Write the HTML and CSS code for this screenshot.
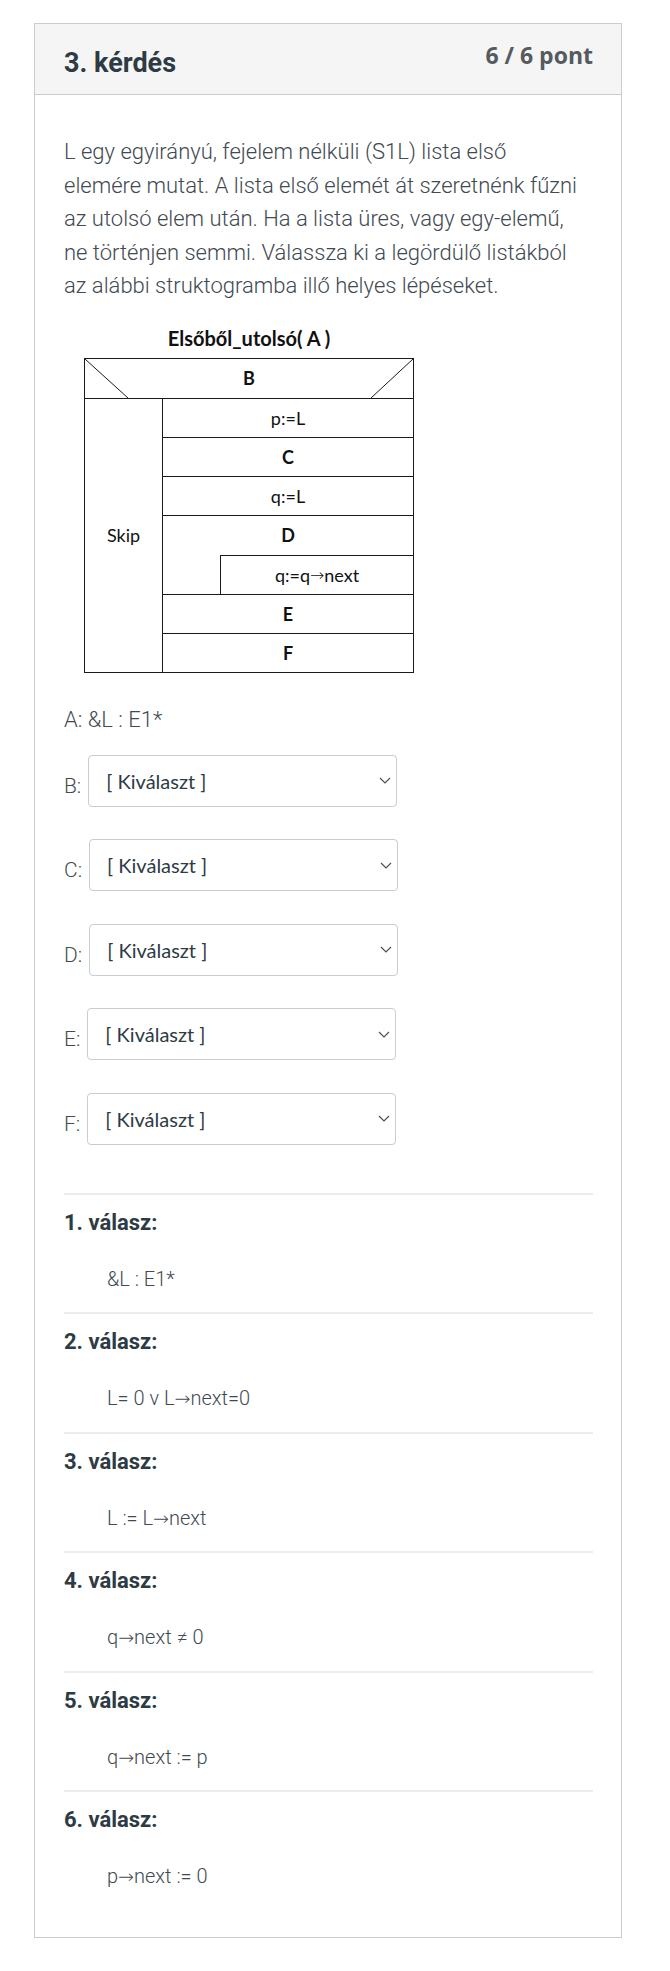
FILE: index.html
```html
<!DOCTYPE html>
<html lang="hu">
<head>
<meta charset="utf-8">
<title>3. kérdés</title>
<link rel="stylesheet" href="styles.css">
</head>
<body>
<div class="page">
  <div class="card">
    <div class="card-head">
      <h2 class="q-title">3. kérdés</h2>
      <div class="q-points">6 / 6 pont</div>
    </div>
    <div class="card-body">
      <p class="q-text">L egy egyirányú, fejelem nélküli (S1L) lista első<br>elemére mutat. A lista első elemét át szeretnénk fűzni<br>az utolsó elem után. Ha a lista üres, vagy egy-elemű,<br>ne történjen semmi. Válassza ki a legördülő listákból<br>az alábbi struktogramba illő helyes lépéseket.</p>

      <div class="nsd-wrap">
        <div class="nsd-title">Elsőből_utolsó( A )</div>
        <div class="nsd">
          <div class="nsd-head">
            <svg class="nsd-diag" viewBox="0 0 328 39" preserveAspectRatio="none">
              <line x1="0" y1="0" x2="43" y2="39"></line>
              <line x1="328" y1="0" x2="286" y2="39"></line>
            </svg>
            <span class="nsd-cond">B</span>
          </div>
          <div class="nsd-body">
            <div class="nsd-skip">Skip</div>
            <div class="nsd-seq">
              <div class="nsd-row">p:=L</div>
              <div class="nsd-row nsd-bold">C</div>
              <div class="nsd-row">q:=L</div>
              <div class="nsd-loop">
                <div class="nsd-loop-cond nsd-bold">D</div>
                <div class="nsd-loop-body">
                  <div class="nsd-loop-indent"></div>
                  <div class="nsd-loop-stmt">q:=q<span class="nsd-arr">→</span>next</div>
                </div>
              </div>
              <div class="nsd-row nsd-bold">E</div>
              <div class="nsd-row nsd-bold">F</div>
            </div>
          </div>
        </div>
      </div>

      <p class="given">A: &amp;L : E1*</p>

      <div class="picks">
        <div class="pick">
          <span class="pick-label">B:</span>
          <div class="select"><span>[ Kiválaszt ]</span><svg class="chev" viewBox="0 0 12 7"><path d="M1 1 L6 6 L11 1"></path></svg></div>
        </div>
        <div class="pick">
          <span class="pick-label">C:</span>
          <div class="select"><span>[ Kiválaszt ]</span><svg class="chev" viewBox="0 0 12 7"><path d="M1 1 L6 6 L11 1"></path></svg></div>
        </div>
        <div class="pick">
          <span class="pick-label">D:</span>
          <div class="select"><span>[ Kiválaszt ]</span><svg class="chev" viewBox="0 0 12 7"><path d="M1 1 L6 6 L11 1"></path></svg></div>
        </div>
        <div class="pick">
          <span class="pick-label">E:</span>
          <div class="select"><span>[ Kiválaszt ]</span><svg class="chev" viewBox="0 0 12 7"><path d="M1 1 L6 6 L11 1"></path></svg></div>
        </div>
        <div class="pick">
          <span class="pick-label">F:</span>
          <div class="select"><span>[ Kiválaszt ]</span><svg class="chev" viewBox="0 0 12 7"><path d="M1 1 L6 6 L11 1"></path></svg></div>
        </div>
      </div>

      <div class="answers">
        <div class="answer">
          <div class="a-label">1. válasz:</div>
          <div class="a-text">&amp;L : E1*</div>
        </div>
        <div class="answer">
          <div class="a-label">2. válasz:</div>
          <div class="a-text">L= 0 v L<span class="arr">→</span>next=0</div>
        </div>
        <div class="answer">
          <div class="a-label">3. válasz:</div>
          <div class="a-text">L := L<span class="arr">→</span>next</div>
        </div>
        <div class="answer">
          <div class="a-label">4. válasz:</div>
          <div class="a-text">q<span class="arr">→</span>next ≠ 0</div>
        </div>
        <div class="answer">
          <div class="a-label">5. válasz:</div>
          <div class="a-text">q<span class="arr">→</span>next := p</div>
        </div>
        <div class="answer">
          <div class="a-label">6. válasz:</div>
          <div class="a-text">p<span class="arr">→</span>next := 0</div>
        </div>
      </div>
    </div>
  </div>
</div>
</body>
</html>
```

FILE: styles.css
```css
* { box-sizing: border-box; }

body {
  margin: 0;
  background: #ffffff;
  color: #2d3b45;
  font-family: Roboto, "Liberation Sans", sans-serif;
}

.page {
  padding: 23px 0 33px 34px;
}

.card {
  width: 588px;
  border: 1px solid #c7cdd1;
  background: #ffffff;
}

.card-head {
  height: 71px;
  background: #f5f5f5;
  border-bottom: 1px solid #c7cdd1;
  display: flex;
  justify-content: space-between;
  align-items: flex-start;
  padding: 23px 28px 0 29px;
}

.q-title {
  margin: 0;
  font: 700 27px/32px Roboto, "Liberation Sans", sans-serif;
  color: #2d3b45;
}

.q-points {
  margin-top: -6px;
  font: 700 23px/28px "Open Sans", "Liberation Sans", sans-serif;
  color: #555a5e;
}

.card-body {
  padding: 40px 20px 46px 29px;
}

.q-text {
  margin: 0;
  white-space: nowrap;
  font: 300 22px/33.5px "Roboto Light", Roboto, "Liberation Sans", sans-serif;
  color: #3f4a52;
}

/* Nassi–Shneiderman diagram */
.nsd-wrap {
  margin: 23px 0 0 20px;
  width: 330px;
  font-family: Lato, "Open Sans", sans-serif;
  color: #111;
}

.nsd-title {
  text-align: center;
  font-weight: 700;
  font-size: 20px;
  line-height: 24px;
}

.nsd {
  margin-top: 8px;
  border: 1px solid #1a1a1a;
  font-size: 18px;
}

.nsd-head {
  height: 40px;
  border-bottom: 1px solid #1a1a1a;
  display: grid;
}

.nsd-diag,
.nsd-cond {
  grid-area: 1 / 1;
}

.nsd-diag {
  width: 100%;
  height: 39px;
}

.nsd-diag line {
  stroke: #1a1a1a;
  stroke-width: 1;
}

.nsd-cond {
  align-self: center;
  justify-self: center;
  font-weight: 700;
  line-height: 20px;
}

.nsd-body {
  display: grid;
  grid-template-columns: 78px 1fr;
}

.nsd-skip {
  border-right: 1px solid #1a1a1a;
  display: flex;
  align-items: center;
  justify-content: center;
}

.nsd-row,
.nsd-loop-cond {
  height: 38.8px;
  display: flex;
  align-items: center;
  justify-content: center;
}

.nsd-loop-stmt {
  height: 39.8px;
  display: flex;
  align-items: center;
  justify-content: center;
  border-top: 1px solid #1a1a1a;
  border-left: 1px solid #1a1a1a;
}

.nsd-row + .nsd-row,
.nsd-loop,
.nsd-loop + .nsd-row {
  border-top: 1px solid #1a1a1a;
}

.nsd-bold {
  font-weight: 700;
}

.nsd-arr {
  font-family: "DejaVu Sans", sans-serif;
  font-weight: 200;
  font-size: 17px;
}

.nsd-loop-body {
  display: grid;
  grid-template-columns: 57px 1fr;
}

/* given + selects */
.given {
  margin: 30px 0 0;
  font: 300 22px/33.5px "Roboto Light", Roboto, "Liberation Sans", sans-serif;
  color: #3f4a52;
}

.picks {
  margin-top: 18px;
  display: flex;
  flex-direction: column;
  gap: 32.5px;
}

.pick {
  display: flex;
  align-items: flex-end;
  gap: 7px;
}

.pick-label {
  font: 300 21px/33.6px "Roboto Light", Roboto, "Liberation Sans", sans-serif;
  color: #3f4a52;
  margin-bottom: 3px;
}

.select {
  width: 309px;
  height: 52px;
  border: 1px solid #c7cdd1;
  border-radius: 4px;
  background: #fff;
  display: flex;
  align-items: center;
  justify-content: space-between;
  padding: 0 5px 0 17px;
  font: 400 20px/24px Lato, "Open Sans", sans-serif;
  color: #2d3b45;
}

.chev {
  width: 12px;
  height: 7px;
  fill: none;
  stroke: #4a4f54;
  stroke-width: 1.2;
}

/* answers */
.answers {
  margin-top: 48px;
  margin-right: 8px;
}

.answer {
  border-top: 2px solid #ececec;
  padding: 14px 0 18.5px;
}

.a-label {
  font: 700 22px/28px Roboto, "Liberation Sans", sans-serif;
}

.a-text {
  margin: 27px 0 0 43px;
  font: 300 20px/30px "Roboto Light", Roboto, "Liberation Sans", sans-serif;
  color: #3f4a52;
}

.arr {
  font-family: "DejaVu Sans", sans-serif;
  font-weight: 200;
  font-size: 19px;
}

.answer:last-child {
  padding-bottom: 0;
}
```
